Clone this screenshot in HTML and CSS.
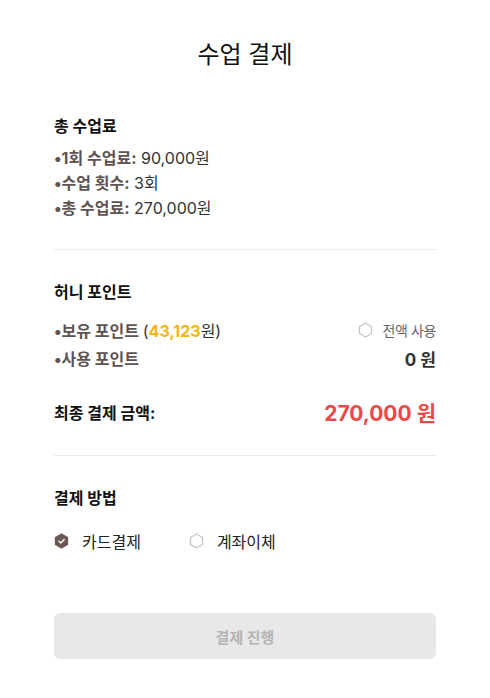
FILE: index.html
```html
<!DOCTYPE html>
<html lang="ko">
<head>
<meta charset="utf-8">
<link rel="stylesheet" href="styles.css">
</head>
<body>
<div class="page">
  <h1 class="title">수업 결제</h1>

  <section class="section first">
    <h2 class="sec-title">총 수업료</h2>
    <ul class="items">
      <li><span class="lbl">•1회 수업료:</span> 90,000원</li>
      <li><span class="lbl">•수업 횟수:</span> 3회</li>
      <li><span class="lbl">•총 수업료:</span> 270,000원</li>
    </ul>
  </section>

  <hr class="divider">

  <section class="section">
    <h2 class="sec-title">허니 포인트</h2>
    <div class="row">
      <span class="lbl">•보유 포인트 <span class="paren">(</span><span class="gold">43,123</span><span class="won">원</span><span class="paren">)</span></span>
      <span class="all">
        <svg class="hex" width="15" height="16" viewBox="0 0 15 16"><polygon points="7.5,1 13.5,4.5 13.5,11.5 7.5,15 1.5,11.5 1.5,4.5" fill="none" stroke="#c4c4c4" stroke-width="1.3" stroke-linejoin="round"/></svg>
        전액 사용
      </span>
    </div>
    <div class="row">
      <span class="lbl">•사용 포인트</span>
      <span class="zero">0 원</span>
    </div>
    <div class="final">
      <span class="final-lbl">최종 결제 금액:</span>
      <span class="final-amt">270,000 원</span>
    </div>
  </section>

  <hr class="divider">

  <section class="section">
    <h2 class="sec-title">결제 방법</h2>
    <div class="methods">
      <label class="method">
        <svg class="hex" width="15" height="16" viewBox="0 0 15 16"><polygon points="7.5,1 13.5,4.5 13.5,11.5 7.5,15 1.5,11.5 1.5,4.5" fill="#6b5853" stroke="#6b5853" stroke-width="1.3" stroke-linejoin="round"/><polyline points="5,8.2 6.8,10 10.2,6.4" fill="none" stroke="#fff" stroke-width="1.4" stroke-linecap="round" stroke-linejoin="round"/></svg>
        카드결제
      </label>
      <label class="method">
        <svg class="hex" width="15" height="16" viewBox="0 0 15 16"><polygon points="7.5,1 13.5,4.5 13.5,11.5 7.5,15 1.5,11.5 1.5,4.5" fill="none" stroke="#c4c4c4" stroke-width="1.3" stroke-linejoin="round"/></svg>
        계좌이체
      </label>
    </div>
  </section>

  <button class="pay" type="button">결제 진행</button>
</div>
</body>
</html>
```

FILE: styles.css
```css
* { box-sizing: border-box; }
html, body { margin: 0; padding: 0; background: #fff; }
body {
  font-family: "Inter", "Noto Sans CJK KR", sans-serif;
  color: #222;
}
.page {
  width: 382px;
  margin: 0 auto;
  padding-top: 39px;
}
.title {
  margin: 0;
  text-align: center;
  font-size: 24px;
  line-height: 32px;
  font-weight: 400;
  color: #111;
}
.section.first { margin-top: 43px; }
.section { margin-top: 30px; }
.sec-title {
  margin: 0;
  font-size: 16px;
  line-height: 24px;
  font-weight: 700;
  color: #111;
}
.items {
  list-style: none;
  margin: 8px 0 0;
  padding: 0;
}
.items li {
  font-size: 16px;
  line-height: 25px;
  color: #333;
}
.lbl {
  font-weight: 700;
  color: #5e5350;
}
.divider {
  border: 0;
  border-top: 1px solid #ebebeb;
  margin: 28px 0 0;
  height: 0;
}
.row {
  display: flex;
  justify-content: space-between;
  align-items: center;
  height: 28px;
  font-size: 16px;
}
.section .sec-title + .row { margin-top: 12px; }
.paren { font-weight: 400; color: #333; }
.gold { color: #f5b50a; font-weight: 700; }
.won { font-weight: 400; color: #333; }
.all {
  display: flex;
  align-items: center;
  gap: 10px;
  font-size: 14px;
  letter-spacing: -0.4px;
  color: #666;
}
.hex { display: block; flex: none; }
.zero {
  font-size: 17px;
  font-weight: 700;
  color: #333;
}
.final {
  display: flex;
  justify-content: space-between;
  align-items: center;
  height: 30px;
  margin-top: 25px;
}
.final-lbl {
  font-size: 16px;
  font-weight: 700;
  color: #111;
}
.final-amt {
  font-size: 21px;
  font-weight: 700;
  color: #ec4848;
}
.methods {
  display: flex;
  gap: 48px;
  margin-top: 19px;
  height: 24px;
  align-items: center;
}
.method {
  display: flex;
  align-items: center;
  gap: 13px;
  font-size: 16px;
  color: #222;
}
.pay {
  display: block;
  width: 100%;
  height: 46px;
  margin-top: 60px;
  border: 0;
  border-radius: 6px;
  background: #e8e8e8;
  color: #b3b3b3;
  font-family: inherit;
  font-size: 15px;
  font-weight: 700;
}
```
